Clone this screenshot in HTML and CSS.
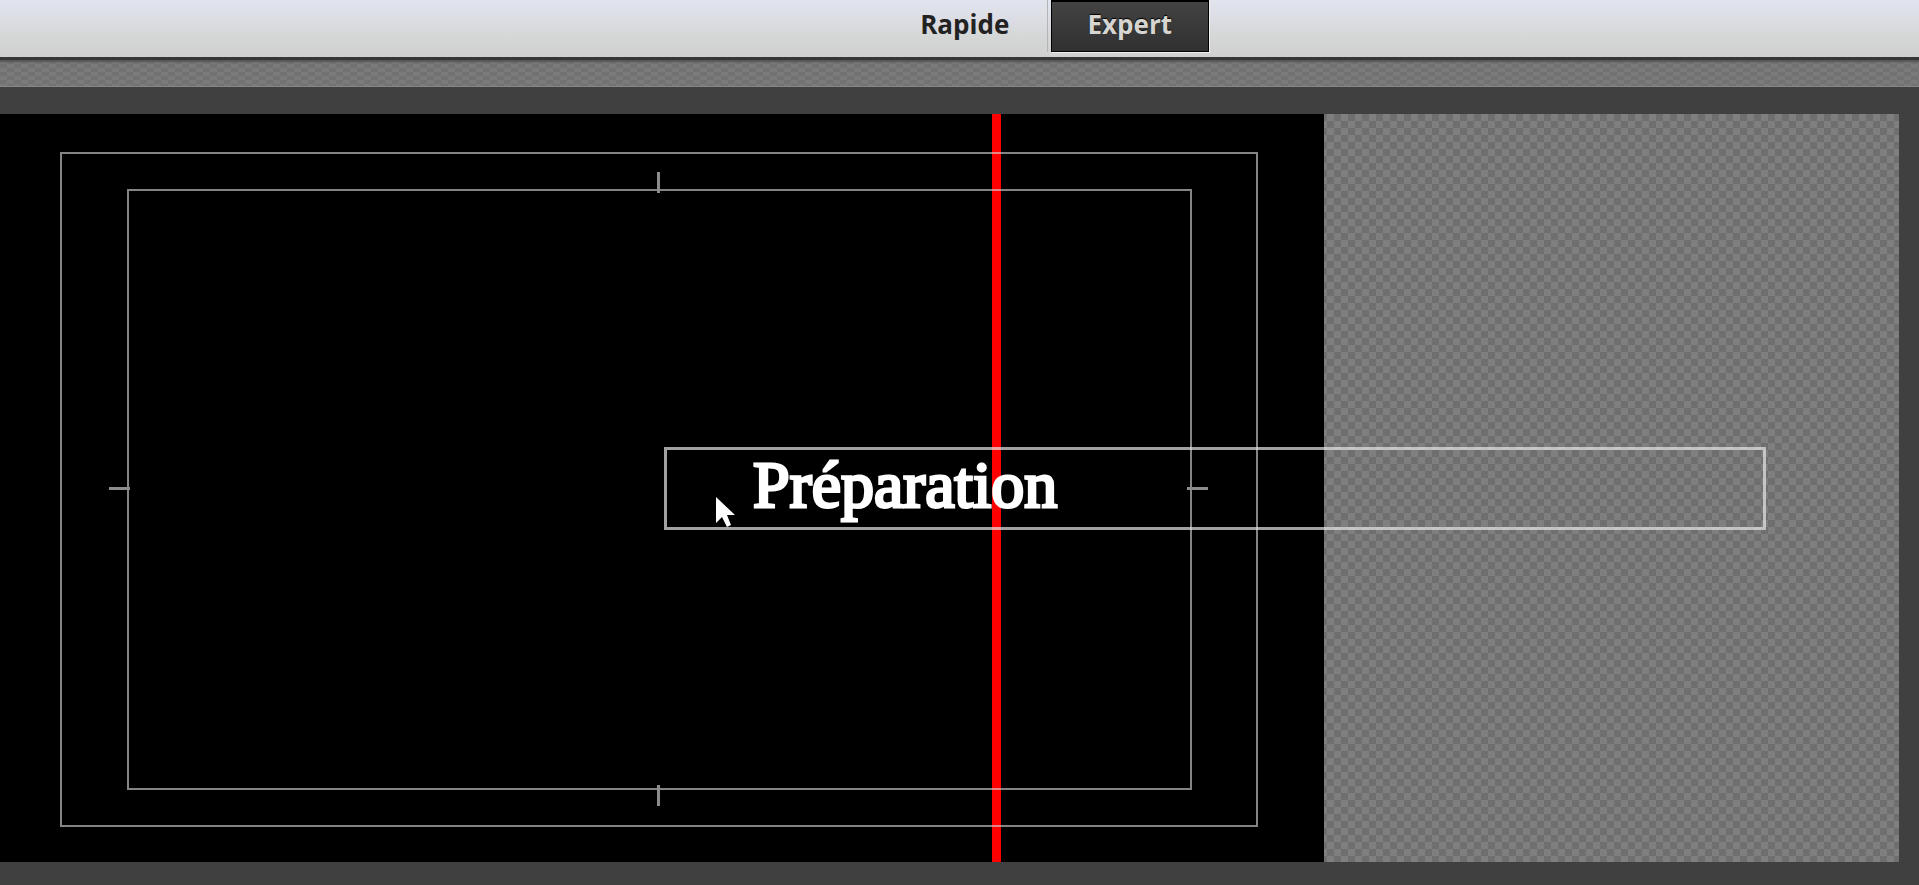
FILE: index.html
```
<!DOCTYPE html>
<html lang="fr">
<head>
  <meta charset="UTF-8">
  <meta name="viewport" content="width=device-width, initial-scale=1.0">
  <title>Expert</title>
  <link rel="stylesheet" href="styles.css">
</head>
<body>
  <header class="topbar">
    <button class="tab" type="button">Rapide</button>
    <button class="tab tab-active" type="button">Expert</button>
  </header>

  <div class="strip"></div>

  <main class="workspace">
    <div class="stage">
      <div class="canvas">
        <div class="playhead"></div>

        <!-- safe margins -->
        <div class="action-safe">
          <div class="title-safe">
            <span class="tick tick-top"></span>
            <span class="tick tick-right"></span>
            <span class="tick tick-bottom"></span>
            <span class="tick tick-left"></span>
          </div>
        </div>
      </div>

      <div class="title-box">
        <h1 class="title">Préparation</h1>
      </div>

      <svg class="cursor" width="20" height="32" viewBox="0 0 20 32" aria-hidden="true">
        <path d="M0 0v26l6-6 5 10 4-2-4-10h8z" fill="#fff"/>
      </svg>
    </div>
  </main>
</body>
</html>
```

FILE: styles.css
```
* {
  box-sizing: border-box;
}

body {
  display: flex;
  flex-direction: column;

  height: 100vh;
  margin: 0;

  background-color: #404040;

  font-family: 'Open Sans', 'Noto Sans', sans-serif;
}

.topbar {
  display: flex;
  align-items: flex-start;

  height: 60px;
  padding-left: 46%;

  border-bottom: 3px solid #353735;
  background: linear-gradient(#e1e4ee, #dcdde4 35%, #d5d6d6 65%, #d0d0d0);
}

.tab {
  width: 165px;
  height: 52px;
  padding: 0 0 4px;

  border: none;
  border-right: 1px solid #b4b4b8;
  background: none;

  color: #222;
  font: bold 26px/36px 'Open Sans', 'Noto Sans', sans-serif;
  cursor: pointer;
}

.tab-active {
  width: 158px;
  margin-left: 3px;
  padding-bottom: 6px;

  border: 1px solid #000;
  border-top-width: 2px;
  background: linear-gradient(#434343, #303030);
  box-shadow: 1px 1px 0 #f0f0f0;

  color: #d6d5d1;
  text-shadow: 0 -1px 1px #000;
}

.strip {
  height: 27px;

  border-bottom: 1px solid #868686;
  background: conic-gradient(#727272 25%, #7b7b7b 0 50%, #727272 0 75%, #7b7b7b 0) 0 0 / 14px 8px;
  box-shadow: inset 0 4px 2px -2px #555;
}

.workspace {
  display: flex;
  flex: 1;

  padding: 27px 20px 23px 0;
}

.stage {
  display: flex;
  flex: 1;

  position: relative;
  overflow: hidden;

  background: conic-gradient(#7f7f7f 25%, #6f6f6f 0 50%, #7f7f7f 0 75%, #6f6f6f 0) 4px 0 / 14px 14px;
}

.canvas {
  position: relative;

  flex: 1;
  margin-right: 575px;

  background-color: #000;
}

.playhead {
  position: absolute;
  top: 0;
  bottom: 0;
  left: 75%;

  width: 9px;
  margin-left: -1px;

  background-color: #f00;
}

.action-safe {
  position: absolute;
  inset: 38px 66px 35px 60px;

  border: 2px solid rgba(220, 220, 220, 0.6);
}

.title-safe {
  position: absolute;
  inset: 35px 64px 35px 65px;

  border: 2px solid rgba(220, 220, 220, 0.6);
}

.tick {
  position: absolute;

  background-color: #8c8c8c;
}

.tick-top,
.tick-bottom {
  left: 50%;

  width: 3px;
  height: 21px;
  margin-left: -3px;
}

.tick-left,
.tick-right {
  top: 50%;

  width: 21px;
  height: 3px;
  margin-top: -3px;
}

.tick-top {
  top: -19px;
}

.tick-right {
  right: -18px;
}

.tick-bottom {
  bottom: -18px;
}

.tick-left {
  left: -20px;
}

.title-box {
  position: absolute;
  top: 333px;
  left: 664px;

  width: 1102px;
  height: 83px;
  padding-left: 86px;

  border: 3px solid rgba(230, 230, 230, 0.7);
}

.title {
  margin: 0;

  color: #fff;
  font: 400 66px/70px 'Liberation Serif', serif;
  -webkit-text-stroke: 3px #fff;
}

.cursor {
  position: absolute;
  top: 383px;
  left: 716px;
}
```
